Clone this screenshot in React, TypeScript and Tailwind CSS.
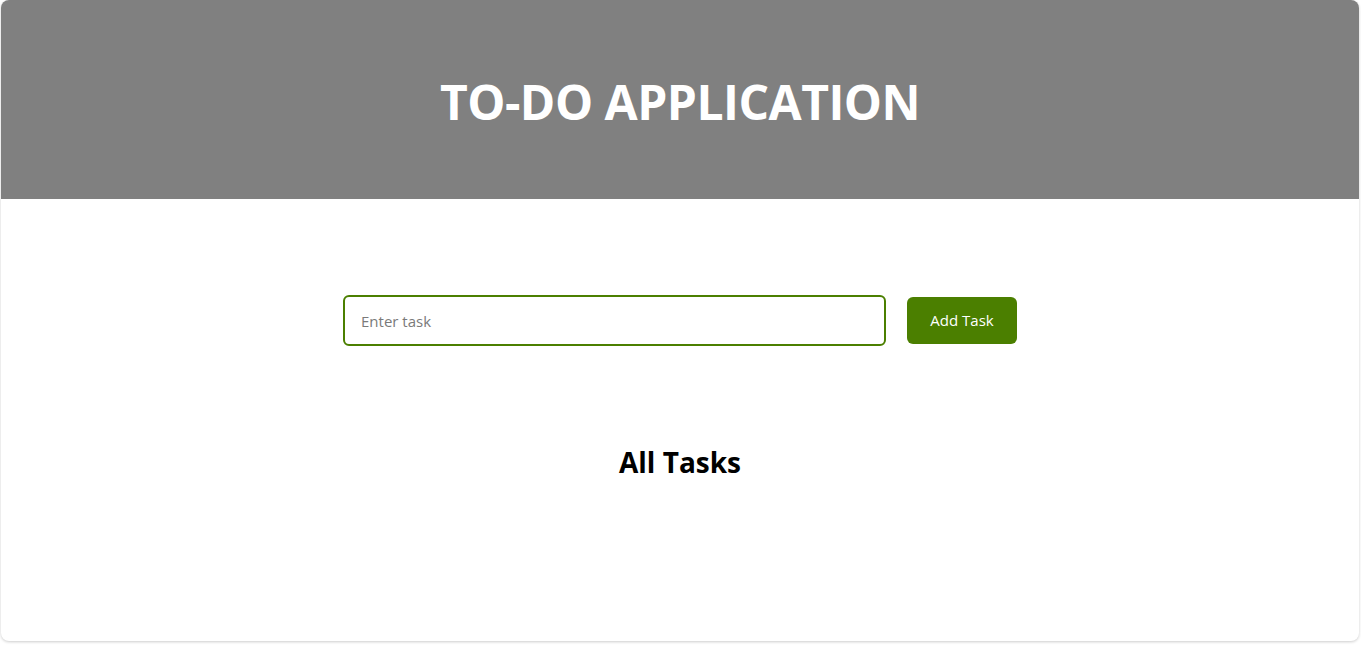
import React from "react";

export default function App() {
  return (
    <div className="w-[1361px] h-[645px] bg-white" style={{ fontFamily: '"Open Sans", "Noto Sans", sans-serif' }}>
      <div className="ml-px w-[1358px] h-[641px] rounded-lg bg-white shadow-[0_1px_3px_rgba(0,0,0,0.2)] overflow-hidden flex flex-col">
        <header className="h-[199px] pt-[4px] bg-[#808080] flex items-center justify-center">
          <h1 className="text-[48px] font-bold text-white leading-none tracking-[-0.5px]">TO-DO APPLICATION</h1>
        </header>
        <div className="flex flex-col items-center">
          <div className="mt-[96px] flex items-center gap-[21px]">
            <input
              type="text"
              placeholder="Enter task"
              className="w-[543px] h-[51px] rounded-md border-2 border-[#4b7f00] px-4 text-[15px] text-gray-800 placeholder:text-[#7a7a7a] outline-none"
            />
            <button className="w-[110px] h-[47px] rounded-md bg-[#4b7f00] text-white text-[15px]">Add Task</button>
          </div>
          <h2 className="mt-[102px] text-[28px] font-bold text-black leading-none">All Tasks</h2>
        </div>
      </div>
    </div>
  );
}
